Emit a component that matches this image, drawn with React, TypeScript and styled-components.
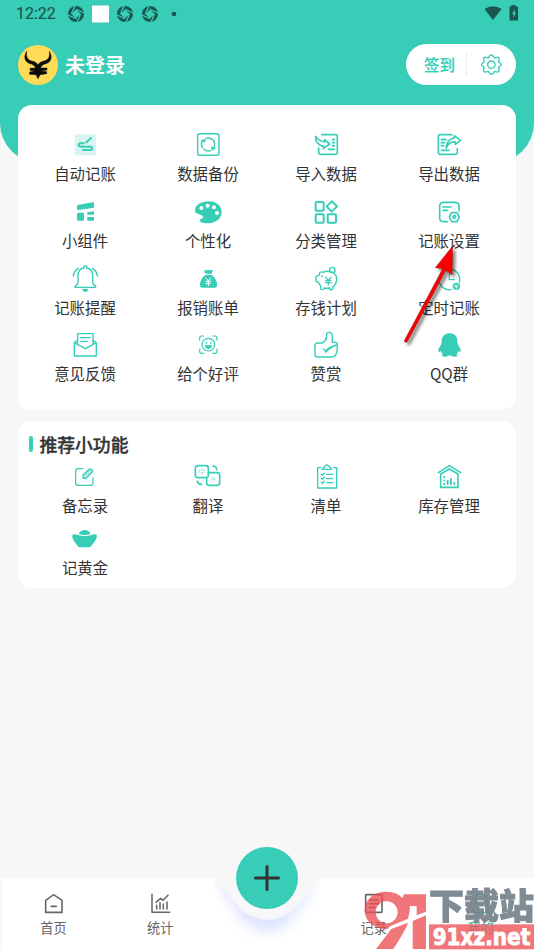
import React from "react";
import styled, { createGlobalStyle } from "styled-components";

const TEAL = "#37cdb7";
const DARK = "#1b574e";

const GlobalStyle = createGlobalStyle`
  * { box-sizing: border-box; }
  body { margin: 0; background: #f7f7f7; }
`;

const Screen = styled.div`
  position: relative;
  display: flex;
  flex-direction: column;
  width: 534px;
  height: 950px;
  overflow: hidden;
  background: #f7f7f7;
  color: #333;
  font-family: "Noto Sans CJK SC", sans-serif;
`;

const Header = styled.header`
  flex: none;
  height: 163px;
  background: ${TEAL};
  border-radius: 0 0 40px 40px;
`;

const StatusBar = styled.div`
  display: flex;
  align-items: center;
  height: 27px;
  padding: 0 14px 0 16px;
  color: ${DARK};
`;

const Clock = styled.span`
  width: 51px;
  font: 400 16px/27px Roboto, sans-serif;
  -webkit-text-stroke: 0.2px ${DARK};
`;

const StatusIcons = styled.div`
  display: flex;
  flex: 1;
  align-items: center;
`;

const ProfileRow = styled.div`
  display: flex;
  align-items: center;
  justify-content: space-between;
  padding: 17px 18px 0;
`;

const Profile = styled.div`
  display: flex;
  align-items: center;
  gap: 7px;
`;

const UserName = styled.span`
  font-size: 20px;
  line-height: 40px;
  font-weight: 700;
  color: #fff;
`;

const ActionPill = styled.div`
  display: flex;
  align-items: center;
  width: 110px;
  height: 41px;
  padding-left: 18px;
  border-radius: 21px;
  background: #fff;
`;

const SignIn = styled.span`
  width: 42px;
  padding-bottom: 1px;
  font-size: 15.5px;
  font-weight: 500;
  color: ${TEAL};
  -webkit-text-stroke: 0.2px ${TEAL};
`;

const PillDivider = styled.span`
  width: 1px;
  height: 23px;
  background: #e8ecec;
`;

const GearSlot = styled.span`
  display: flex;
  margin-left: 9px;
`;

const Main = styled.main`
  display: flex;
  flex: 1;
  flex-direction: column;
  gap: 11px;
  margin-top: -58px;
  padding: 0 18px;
`;

const Card = styled.section<{ $height: number; $top: number }>`
  height: ${(p) => p.$height}px;
  padding: ${(p) => p.$top}px 0 0 6px;
  border-radius: 14px;
  background: #fff;
`;

const Grid = styled.div<{ $row: number }>`
  display: grid;
  grid-template-columns: 123px 123px 113px 133px;
  grid-auto-rows: ${(p) => p.$row}px;
`;

const Tile = styled.div`
  display: flex;
  flex-direction: column;
  align-items: center;
  svg { display: block; }
`;

const TileLabel = styled.span`
  padding-right: 1px;
  font-size: 15.4px;
  line-height: 24px;
  white-space: nowrap;
`;

const SectionTitle = styled.h2`
  display: flex;
  align-items: center;
  gap: 6.5px;
  height: 30px;
  margin: 0 0 3px;
  padding-left: 5px;
  font-size: 17.8px;
  font-weight: 500;
  -webkit-text-stroke: 0.35px #333;
  &::before {
    content: "";
    width: 4px;
    height: 16px;
    border-radius: 2px;
    background: ${TEAL};
  }
`;

const NavBar = styled.nav`
  display: grid;
  flex: none;
  grid-template-columns: repeat(5, 1fr);
  height: 72px;
`;

const NavItem = styled.div<{ $first?: boolean; $active?: boolean }>`
  display: flex;
  flex-direction: column;
  align-items: center;
  padding-top: 10px;
  background: #fff;
  box-shadow: ${(p) => (p.$first ? "inset 2px 0 #f7f7f7" : "none")};
  color: ${(p) => (p.$active ? TEAL : "#666")};
  font-size: 13.2px;
  line-height: 17px;
`;

const NavCenter = styled.div`
  position: relative;
  height: 72px;
  svg { display: block; }
`;

const AddButton = styled.button`
  position: absolute;
  top: -31px;
  left: 22.4px;
  display: flex;
  align-items: center;
  justify-content: center;
  width: 62px;
  height: 62px;
  padding: 0;
  border: 0;
  border-radius: 50%;
  background: ${TEAL};
`;

const Overlay = styled.svg<{ $x: number; $y: number }>`
  position: absolute;
  left: ${(p) => p.$x}px;
  top: ${(p) => p.$y}px;
  pointer-events: none;
`;

type IconProps = { origin: string; color?: string; width?: number; children: React.ReactNode };

const Icon = ({ origin, color = TEAL, width = 5, children }: IconProps) => (
  <svg
    width="31"
    height="31"
    viewBox={`${origin} 93 93`}
    fill="none"
    stroke={color}
    strokeWidth={width}
    strokeLinecap="round"
    strokeLinejoin="round"
  >
    {children}
  </svg>
);

const Solid = ({ d }: { d: string }) => <path d={d} fill={TEAL} stroke="none" />;

const tools = [
  {
    label: "自动记账",
    icon: (
      <Icon origin="90 15" width={6}>
        <rect x="104" y="27" width="64" height="64" rx="5" fill="#d9f5f1" stroke="none" />
        <path d="M139 52 153 39M131 55H121Q114 56 116 62Q118 65 126 65H151Q158 66 157 71Q156 75 148 75H129" />
      </Icon>
    ),
  },
  {
    label: "数据备份",
    icon: (
      <Icon origin="459 15" width={4.3}>
        <rect x="473" y="26" width="64" height="65" rx="6" />
        <path d="M487 67Q481 54 489 45M498 40Q510 36 519 45Q527 54 522 69M512 77Q501 81 491 72" />
        <Solid d="M484 45 498 42 494 54ZM513 64 528 70 515 77Z" />
      </Icon>
    ),
  },
  {
    label: "导入数据",
    icon: (
      <Icon origin="93 15" width={5}>
        <path d="M126 29H166Q172 29 172 35V82Q172 88 166 88H122Q116 88 116 81V69M158 44H163M158 53H163M158 62H163M145 73H163" />
        <path d="M107 34Q105 57 130 64V71L149 57 134 44V51Q116 48 107 34Z" />
      </Icon>
    ),
  },
  {
    label: "导出数据",
    icon: (
      <Icon origin="462 15" width={5}>
        <path d="M515 29H481Q475 29 475 35V82Q475 88 481 88H526Q532 88 532 82V71M484 44H499M484 53H494M484 62H491M484 76H507" />
        <path d="M498 70Q501 42 523 39V32L542 46 526 58V51Q507 49 498 70Z" />
      </Icon>
    ),
  },
  {
    label: "小组件",
    icon: (
      <Icon origin="90 215">
        <Solid d="M113 239 158 231Q162 231 162 235V247L115 254Q111 254 111 250V242ZM114 262H129Q132 262 132 265V283Q132 286 129 286H114Q111 286 111 283V265ZM142 261 162 258V268H142ZM142 275H162V286H142Z" />
      </Icon>
    ),
  },
  {
    label: "个性化",
    icon: (
      <Icon origin="459 215">
        <Solid d="M506 228C529 228 545 242 545 260C545 281 526 294 501 294C488 294 478 291 479 285C480 280 490 280 489 274C487 266 468 269 465 258C463 241 482 228 506 228Z" />
        <g fill="#fff" stroke="none">
          <circle cx="484" cy="248" r="6" />
          <circle cx="503" cy="241" r="6" />
          <circle cx="522" cy="246" r="6" />
          <circle cx="531" cy="263" r="6" />
        </g>
      </Icon>
    ),
  },
  {
    label: "分类管理",
    icon: (
      <Icon origin="93 215" width={6}>
        <rect x="107" y="230" width="24" height="26" rx="3" />
        <rect x="107" y="267" width="24" height="25" rx="3" />
        <rect x="143" y="267" width="25" height="25" rx="3" />
        <path d="M155 228 171 243 155 259 140 243Z" />
      </Icon>
    ),
  },
  {
    label: "记账设置",
    icon: (
      <Icon origin="462 215" width={5}>
        <path d="M502 289H491Q479 289 479 277V243Q479 231 491 231H525Q537 231 537 243V257M489 245H513M489 255H503" />
        <path d="M515 262H531L538 275 531 289H515L508 275Z" />
        <circle cx="523" cy="275" r="4" />
      </Icon>
    ),
  },
  {
    label: "记账提醒",
    icon: (
      <Icon origin="90 26" width={4.2}>
        <path d="M106 96Q103 94 108 91Q114 88 114 80V61Q114 40 132 38Q130 31 136 31Q142 31 140 38Q158 40 158 61V80Q158 88 165 91Q169 94 166 96ZM100 62Q101 49 114 39M172 62Q171 49 158 39" />
        <Solid d="M127 101H145Q143 110 136 110Q129 110 127 101Z" />
      </Icon>
    ),
  },
  {
    label: "报销账单",
    icon: (
      <Icon origin="459 26" width={3}>
        <Solid d="M492 43Q499 47 505 43Q512 47 519 43L515 55H496ZM496 59H515Q530 70 531 88Q532 97 524 97H487Q479 97 480 88Q481 70 496 59Z" />
        <path d="M498 68 505 77 512 68M505 77V91M498 78H512M498 84H512" stroke="#fff" />
      </Icon>
    ),
  },
  {
    label: "存钱计划",
    icon: (
      <Icon origin="93 56" width={4.1}>
        <path d="M115 91Q108 91 108 95V107Q110 110 116 111Q117 118 122 121V131Q124 135 132 131V128Q140 131 150 128V132Q154 135 158 131V125Q170 117 170 101Q169 80 148 79Q138 76 130 81Q125 78 119 81V87ZM137 96 145 105 153 96M145 105V118M137 106H153M137 112H153" />
        <circle cx="157" cy="74" r="8" />
        <circle cx="126" cy="93" r="1" />
      </Icon>
    ),
  },
  {
    label: "定时记账",
    icon: (
      <Icon origin="462 56" width={4.1}>
        <path d="M514 133A31 31 0 1 1 538 111M508 85V103H523" />
        <circle cx="529" cy="123" r="11" fill={TEAL} stroke="none" />
        <path d="M525 118 529 123 533 118M529 123V129M525 124H533" stroke="#fff" strokeWidth="2.5" />
      </Icon>
    ),
  },
  {
    label: "意见反馈",
    icon: (
      <Icon origin="90 226" width={4.1}>
        <path d="M113 257 103 264V304H169V264L160 257M113 269V237H159V269M103 264 136 282 169 264M122 249H150M122 260H142" />
      </Icon>
    ),
  },
  {
    label: "给个好评",
    icon: (
      <Icon origin="459 226" width={3.7}>
        <path d="M479 257V250Q479 244 485 244H491M518 244H525Q531 244 531 250V257M531 283V290Q531 296 525 296H518M492 296H485Q479 296 479 290V283" />
        <circle cx="505" cy="270" r="19" />
        <path d="M499 263V266M512 263V266" />
        <Solid d="M494 272H517Q515 283 505 283Q496 283 494 272Z" />
      </Icon>
    ),
  },
  {
    label: "赞赏",
    icon: (
      <Icon origin="93 256" width={4.2}>
        <path d="M113 295H127Q138 288 140 277V269Q140 263 148 263Q157 263 157 273V287Q155 293 160 293Q172 291 172 300Q173 317 168 329Q164 337 152 337H112Q105 337 105 330V303Q105 296 113 295Z" />
        <Solid d="M125 309 138 315Q148 304 170 299V303Q150 310 137 326Q134 318 125 309Z" />
      </Icon>
    ),
  },
  {
    label: "QQ群",
    icon: (
      <Icon origin="462 256">
        <Solid d="M509 266C525 266 533 277 532 292Q533 297 534 300Q543 312 542 320Q541 325 535 319Q533 325 530 328Q536 336 524 336Q514 336 509 332Q504 336 494 336Q482 336 488 328Q484 325 482 319Q477 325 475 320Q474 312 483 300Q484 297 485 292C484 277 493 266 509 266Z" />
      </Icon>
    ),
  },
];

const extras = [
  {
    label: "备忘录",
    icon: (
      <Icon origin="180 186" width={3.8}>
        <path d="M218 206H204Q197 206 197 213V249Q197 256 204 256H242Q249 256 249 249V234" />
        <path d="M219 235V225L238 207Q242 205 248 211Q249 214 247 216L228 235Z" fill="#a8e8df" />
      </Icon>
    ),
  },
  {
    label: "翻译",
    icon: (
      <Icon origin="549 186" width={4.8}>
        <rect x="556" y="197" width="39" height="36" rx="8" />
        <path d="M597 218H621Q629 218 629 226V248Q629 256 621 256H598Q590 256 590 248V235M608 198Q620 198 620 209M562 243Q564 253 575 253" />
        <path d="M569 210H584V218H569ZM576.5 206V225M604 242 610 230 616 242M606 239H614" strokeWidth="1.8" stroke="#8ce2d6" />
      </Icon>
    ),
  },
  {
    label: "清单",
    icon: (
      <Icon origin="93 21" width={4.1}>
        <path d="M122 38H113V99H170V38H161M127 43H155Q153 37 148 36Q147 30 141 30Q135 30 134 36Q128 37 127 43ZM124 58 127 61 133 55M124 70 127 73 133 67M124 82 127 85 133 79M140 58H158M140 71H158M140 83H158" />
      </Icon>
    ),
  },
  {
    label: "库存管理",
    icon: (
      <Icon origin="462 21" width={4.8}>
        <path d="M475 53 508 32 542 53M482 57V97H534V57L508 42Z" strokeLinejoin="miter" />
        <path d="M492 66H493M492 76H493M492 87H493M503 77V88M513 72V88M523 84V88" strokeWidth="5.5" />
      </Icon>
    ),
  },
  {
    label: "记黄金",
    icon: (
      <Icon origin="180 372">
        <Solid d="M206 402Q210 391 224 390Q238 391 241 402Q224 408 206 402ZM188 404Q194 401 204 405Q224 411 244 405Q254 401 260 404Q263 411 257 420L244 438Q242 442 237 442H210Q206 442 203 438L190 420Q184 411 188 404Z" />
      </Icon>
    ),
  },
];

const Tiles = ({ items }: { items: typeof tools }) => (
  <>
    {items.map((t) => (
      <Tile key={t.label}>
        {t.icon}
        <TileLabel>{t.label}</TileLabel>
      </Tile>
    ))}
  </>
);

const SyncGlyph = () => (
  <svg width="18" height="18" viewBox="-9 -9 18 18">
    <circle r="8" fill={DARK} />
    <path d="M0-4.6 4.6 0 0 4.6-4.6 0Z" fill={TEAL} />
    <path d="M-4.6 0-1-8M0-4.6 8-1M4.6 0 1 8M0 4.6-8 1" stroke={TEAL} strokeWidth="1.3" />
  </svg>
);

export default function App() {
  return (
    <>
      <GlobalStyle />
      <Screen>
        <Header>
          <StatusBar>
            <Clock>12:22</Clock>
            <StatusIcons>
              <SyncGlyph />
              <svg width="31" height="18">
                <rect x="7" y="0.5" width="17" height="17" fill="#fff" />
              </svg>
              <SyncGlyph />
              <svg width="6.5" height="18" />
              <SyncGlyph />
              <svg width="30" height="18">
                <circle cx="15" cy="9" r="2.3" fill={DARK} />
              </svg>
            </StatusIcons>
            <svg width="36" height="20" viewBox="0 0 36 20">
              <path d="M0.5 5Q9 -0.5 17.5 5L9 16Z" fill={DARK} />
              <path d="M27.500 1H31.500V2.500H34V16.500H25.500V2.500H27.500Z" fill={DARK} />
              <path d="M30.500 5 28 10H29.500V14L32 8.500H30.500Z" fill={TEAL} />
            </svg>
          </StatusBar>
          <ProfileRow>
            <Profile>
              <svg width="40" height="40" viewBox="54 134 120 120">
                <circle cx="114" cy="194" r="60" fill="#ffdb58" />
                <path
                  d="M80 153C70 169 73 187 94 191Q103 193 107 203L90 204V210L106 211 89 215V222L108 223 114 235 120 223 140 220V214L122 212 141 209V203H121Q125 193 134 191C155 187 158 169 148 153C150 168 147 178 133 182C123 184 117 188 114 194C111 188 105 184 94 182C81 178 78 168 80 153Z"
                  fill="#0b0b0b"
                  stroke="#0b0b0b"
                  strokeWidth="1.5"
                />
              </svg>
              <UserName>未登录</UserName>
            </Profile>
            <ActionPill>
              <SignIn>签到</SignIn>
              <PillDivider />
              <GearSlot>
                <Icon origin="289 147" width={4.2}>
                  <path d="M328 170Q335 160 342 170Q343 175 348 173Q360 169 358 180Q355 185 359 188Q370 194 359 200Q355 203 358 208Q360 219 348 215Q343 213 342 218Q335 228 328 218Q327 213 322 215Q310 219 312 208Q315 203 311 200Q300 194 311 188Q315 185 312 180Q310 169 322 173Q327 175 328 170Z" />
                  <circle cx="335" cy="194" r="11" />
                </Icon>
              </GearSlot>
            </ActionPill>
          </ProfileRow>
        </Header>

        <Main>
          <Card $height={305} $top={25}>
            <Grid $row={66.75}>
              <Tiles items={tools} />
            </Grid>
          </Card>
          <Card $height={167} $top={8}>
            <SectionTitle>推荐小功能</SectionTitle>
            <Grid $row={62}>
              <Tiles items={extras} />
            </Grid>
          </Card>
        </Main>

        <NavBar>
          <NavItem $first>
            <Icon origin="114 174" color="#666" width={4.8}>
              <path d="M137 211 161 194 186 211V247H137ZM153 229H169" strokeLinejoin="miter" />
            </Icon>
            首页
          </NavItem>
          <NavItem>
            <Icon origin="434 174" color="#666" width={4.5}>
              <path d="M455 193V247H508M467 217 481 205 488 211 503 196M469 226V237M479 218V237M489 222V237M500 216V237" />
            </Icon>
            统计
          </NavItem>
          <NavCenter>
            <svg width="106.8" height="72" viewBox="41 144 320 216" preserveAspectRatio="none">
              <defs>
                <linearGradient id="glow" x1="0" x2="1">
                  <stop offset="0" stopColor="#e5dcff" />
                  <stop offset="0.5" stopColor="#dce3ff" />
                  <stop offset="1" stopColor="#deebff" />
                </linearGradient>
                <filter id="soft" x="-40%" y="-40%" width="180%" height="180%">
                  <feGaussianBlur stdDeviation="19" />
                </filter>
              </defs>
              <rect x="40" y="144" width="322" height="216" fill="#fff" />
              <path d="M45 150C85 175 105 300 201 304C297 300 317 175 357 150Z" fill="url(#glow)" filter="url(#soft)" />
              <path
                d="M41 143V158C70 166 85 198 110 225C157 284 245 284 292 225C317 198 332 178 361 158V143Z"
                fill="#f7f7f7"
              />
            </svg>
            <AddButton aria-label="add">
              <svg width="28" height="28" viewBox="0 0 28 28" stroke="#333" strokeWidth="3" strokeLinecap="round">
                <path d="M14 2.5V25.5M2.5 14H25.5" />
              </svg>
            </AddButton>
          </NavCenter>
          <NavItem>
            <Icon origin="13 54" color="#666" width={4.8}>
              <rect x="36" y="74" width="49" height="53" rx="2" />
              <path d="M48 90H74M48 101H74M48 112H64" />
            </Icon>
            记录
          </NavItem>
          <NavItem $active>
            <Icon origin="333 54" width={4.8}>
              <path d="M370 98Q361 91 363 84Q366 73 380 73Q394 73 397 84Q399 91 390 98Q403 104 403 117V127H358V117Q358 104 370 98Z" />
            </Icon>
            我的
          </NavItem>
        </NavBar>

        <Overlay $x={354} $y={870} width="180" height="80" viewBox="0 0 540 240">
          <g fill="#ec4f54" fillOpacity="0.78">
            <path
              fillRule="evenodd"
              d="M150 73H216V125L188 136V108H168Q168 128 162 146L108 169Q103 178 94 178Q38 170 32 126C31 87 60 65 98 65Q128 65 145 84ZM98 94A33 33 0 1 0 98 160A33 33 0 1 0 98 94Z"
            />
            <path d="M216 136V237H176V153ZM162 158Q155 180 118 237H66L112 177Z" />
            <rect x="225" y="163" width="315" height="75" />
          </g>
          <text
            x="225"
            y="148"
            fontSize="106"
            fontWeight="900"
            fill="#76828a"
            stroke="#76828a"
            strokeWidth="3"
            opacity="0.92"
            textLength="315"
            lengthAdjust="spacingAndGlyphs"
          >
            下载站
          </text>
          <text
            x="236"
            y="226"
            fontFamily="DejaVu Sans"
            fontSize="70"
            fontWeight="700"
            fill="#fff"
            stroke="#fff"
            strokeWidth="2.5"
            textLength="293"
            lengthAdjust="spacingAndGlyphs"
          >
            91xz.net
          </text>
        </Overlay>

        <Overlay $x={390} $y={235} width="80" height="120" viewBox="330 -30 240 360">
          <defs>
            <filter id="drop" x="-30%" y="-30%" width="160%" height="160%">
              <feDropShadow dx="8" dy="8" stdDeviation="5" floodColor="#000" floodOpacity="0.5" />
            </filter>
          </defs>
          <path
            d="M518 3 516 89 498 76 382 290Q378 294 374 290Q372 288 374 285L488 71 466 68Z"
            fill="#fb0505"
            stroke="#7a1010"
            strokeWidth="1.2"
            filter="url(#drop)"
          />
        </Overlay>
      </Screen>
    </>
  );
}
